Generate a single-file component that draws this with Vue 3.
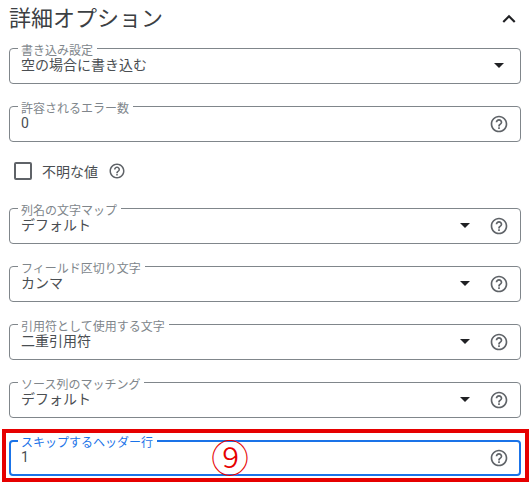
<template>
  <div class="panel">
    <!-- Section header -->
    <header class="head">
      <h2>詳細オプション</h2>
      <svg class="chevron" width="26" height="26" viewBox="0 0 24 24">
        <path d="M7.41 15.41 12 10.83l4.59 4.58L18 14l-6-6-6 6z" />
      </svg>
    </header>

    <div class="fields">
      <template v-for="f in fields" :key="f.label">
        <!-- Checkbox row -->
        <div v-if="f.checkbox" class="check-row">
          <span class="box"></span>
          <span class="check-label">{{ f.label }}</span>
          <svg class="help" width="18" height="18" viewBox="0 0 24 24">
            <path :d="helpPath" />
          </svg>
        </div>

        <!-- Outlined field -->
        <div v-else class="field" :class="{ focused: f.focused, 'arrow-only': !f.help }">
          <span class="label">{{ f.label }}</span>
          <span class="value">{{ f.value }}</span>
          <span v-if="f.select" class="arrow"></span>
          <svg v-if="f.help" class="help" width="20" height="20" viewBox="0 0 24 24">
            <path :d="helpPath" />
          </svg>
        </div>
      </template>
    </div>

    <!-- Annotation over the last field -->
    <div class="marker"></div>
    <span class="number">⑨</span>
  </div>
</template>

<script setup>
const helpPath =
  "M11 18h2v-2h-2v2zm1-16C6.48 2 2 6.48 2 12s4.48 10 10 10 10-4.48 10-10S17.52 2 12 2zm0 18c-4.41 0-8-3.59-8-8s3.59-8 8-8 8 3.59 8 8-3.59 8-8 8zm0-14c-2.21 0-4 1.79-4 4h2c0-1.1.9-2 2-2s2 .9 2 2c0 2-3 1.75-3 5h2c0-2.25 3-2.5 3-5 0-2.21-1.79-4-4-4z";

const fields = [
  { label: "書き込み設定", value: "空の場合に書き込む", select: true },
  { label: "許容されるエラー数", value: "0", help: true },
  { label: "不明な値", checkbox: true },
  { label: "列名の文字マップ", value: "デフォルト", select: true, help: true },
  { label: "フィールド区切り文字", value: "カンマ", select: true, help: true },
  { label: "引用符として使用する文字", value: "二重引用符", select: true, help: true },
  { label: "ソース列のマッチング", value: "デフォルト", select: true, help: true },
  { label: "スキップするヘッダー行", value: "1", help: true, focused: true },
];
</script>

<style>
html, body { background: #fff; overflow: hidden; }
</style>

<style scoped>
.panel {
  position: relative;
  width: 532px;
  height: 485px;
  box-sizing: border-box;
  padding: 0 11px 0 9px;
  overflow: hidden;
  font-family: Roboto, "Noto Sans CJK JP", sans-serif;
  color: #3c4043;
}
.head {
  display: flex;
  align-items: center;
  justify-content: space-between;
  height: 34px;
  margin-bottom: 14px;
}
.head h2 {
  margin: -3px 0 0;
  font-size: 22px;
  font-weight: 400;
  color: #3c4043;
}
.chevron { fill: #202124; margin: 4px -1px 0 0; }
.fields { display: flex; flex-direction: column; gap: 22px; }
.field {
  position: relative;
  display: flex;
  align-items: center;
  height: 36px;
  box-sizing: border-box;
  padding: 0 11px 0 11px;
  border: 1px solid #80868b;
  border-radius: 4px;
}
.label {
  position: absolute;
  left: 8px;
  top: -5px;
  padding: 0 4px 0 3px;
  background: #fff;
  font-size: 12px;
  line-height: 14px;
  color: #80868b;
}
.value {
  flex: 1;
  margin-top: -3px;
  font-size: 14px;
  line-height: 20px;
  color: #4a4e52;
}
.arrow {
  width: 0;
  height: 0;
  margin-top: -1px;
  margin-right: 19px;
  border-left: 5px solid transparent;
  border-right: 5px solid transparent;
  border-top: 5px solid #202124;
}
.arrow-only { padding-right: 16px; }
.arrow-only .arrow { margin-right: 0; }
.help { fill: #5f6368; flex: none; }
.check-row {
  display: flex;
  align-items: center;
  height: 22px;
  margin: -4px 0 4px 5px;
}
.box {
  box-sizing: border-box;
  width: 18px;
  height: 18px;
  border: 2px solid #5f6368;
  border-radius: 2px;
  margin-right: 10px;
}
.check-label { font-size: 14px; color: #4a4e52; margin-right: 10px; }
.field.focused { border: 2px solid #1a73e8; padding: 0 10px; }
.field.focused .label { color: #1a73e8; top: -6px; left: 7px; }
.marker {
  position: absolute;
  left: 2px;
  top: 429px;
  width: 527px;
  height: 53px;
  box-sizing: border-box;
  border: 4px solid #e60000;
  pointer-events: none;
}
.number {
  position: absolute;
  left: 211px;
  top: 433px;
  font-family: "Noto Sans CJK JP", sans-serif;
  font-weight: 200;
  font-size: 38px;
  line-height: 46px;
  color: #e60000;
}
</style>
